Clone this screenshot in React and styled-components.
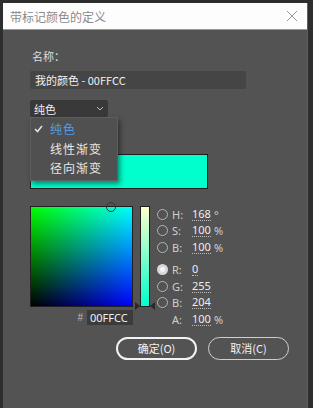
import styled, { createGlobalStyle } from 'styled-components'

const GlobalStyle = createGlobalStyle`
  html, body {
    margin: 0;
    padding: 0;
    background: #2e2e2e;
  }
  body {
    font-family: "Noto Sans CJK SC", "Noto Sans", sans-serif;
  }
`

const Screen = styled.div`
  width: 313px;
  height: 408px;
  padding: 3px 6px 0 3px;
  box-sizing: border-box;
  background: #2e2e2e;
  overflow: hidden;
`

const Window = styled.div`
  width: 304px;
  height: 405px;
  background: #535353;
  border-right: 1px solid #606060;
  display: flex;
  flex-direction: column;
`

const TitleBar = styled.div`
  height: 26px;
  flex: none;
  background: #fdfdfd;
  border-bottom: 1px solid #9a9a9a;
  display: flex;
  align-items: center;
  justify-content: space-between;
  padding: 0 7px 0 7px;
  color: #8a8a8a;
  font-size: 12px;
`

const Close = styled.svg`
  width: 12px;
  height: 12px;
  margin-right: 2px;
`

const Body = styled.div`
  position: relative;
  padding: 19px 0 0 27px;
  display: flex;
  flex-direction: column;
  color: #e0e0e0;
  font-size: 11px;
`

const Label = styled.div`
  line-height: 14px;
  padding-left: 2px;
  color: #dcdcdc;
`

const NameInput = styled.div`
  margin-top: 8px;
  width: 216px;
  height: 18px;
  background: #454545;
  border-radius: 2px;
  color: #f2f2f2;
  line-height: 18px;
  padding-left: 5px;
  box-sizing: border-box;
  font-size: 11px;
`

const Select = styled.div`
  margin-top: 11px;
  width: 78px;
  height: 17px;
  background: #393939;
  border-radius: 2px;
  display: flex;
  align-items: center;
  justify-content: space-between;
  padding: 0 4px 0 4px;
  box-sizing: border-box;
  color: #f0f0f0;
`

const Menu = styled.div`
  position: absolute;
  left: 27px;
  top: 87px;
  width: 86px;
  padding: 1px 0 2px;
  background: #505050;
  border: 1px solid #5e5e5e;
  box-shadow: 2px 3px 5px rgba(0, 0, 0, 0.45);
  z-index: 2;
`

const MenuItem = styled.div`
  height: 19.5px;
  display: flex;
  align-items: center;
  padding-left: 19px;
  position: relative;
  font-size: 12px;
  letter-spacing: 1px;
  color: ${p => (p.$active ? '#4f9ee8' : '#e6e6e6')};
`

const Check = styled.svg`
  position: absolute;
  left: 3px;
  top: 6px;
  width: 9px;
  height: 8px;
`

const Swatch = styled.div`
  margin-top: 37px;
  width: 178px;
  height: 35px;
  box-sizing: border-box;
  background: #00ffcc;
  border: 1.5px solid #1e1e1e;
`

const PickerRow = styled.div`
  margin-top: 17px;
  display: flex;
  align-items: flex-start;
`

const Left = styled.div`
  display: flex;
  flex-direction: column;
  align-items: flex-end;
`

const Field = styled.div`
  position: relative;
  width: 103px;
  height: 101px;
  box-sizing: border-box;
  border: 1px solid #202020;
  background:
    linear-gradient(to right, #000000, #0000ff),
    linear-gradient(to bottom, #00ff00, #000000);
  background-blend-mode: screen;
`

const Marker = styled.div`
  position: absolute;
  left: 75px;
  top: -5px;
  width: 8px;
  height: 8px;
  border-radius: 50%;
  border: 1px solid #333;
`

const SliderWrap = styled.div`
  position: relative;
  margin-left: 7px;
  width: 10px;
  height: 101px;
`

const Slider = styled.div`
  width: 10px;
  height: 101px;
  box-sizing: border-box;
  border: 1px solid #202020;
  background: linear-gradient(to bottom, #ffffcc, #00ffcc);
`

const Arrow = styled.div`
  position: absolute;
  bottom: -3px;
  width: 0;
  height: 0;
  border-top: 4px solid transparent;
  border-bottom: 4px solid transparent;
  ${p => (p.$side === 'left'
    ? 'left: -5px; border-left: 5px solid #2a2a2a;'
    : 'right: -5px; border-right: 5px solid #2a2a2a;')}
`

const HexRow = styled.div`
  margin-top: 3px;
  display: flex;
  align-items: center;
  gap: 4px;
  color: #bdbdbd;
  font-family: "Liberation Sans", sans-serif;
  font-size: 10px;
`

const HexInput = styled.div`
  width: 46px;
  height: 15px;
  line-height: 15px;
  background: #3b3b3b;
  color: #f0f0f0;
  padding-left: 3px;
  box-sizing: border-box;
  font-size: 11px;
  font-family: "Noto Sans", sans-serif;
`

const Channels = styled.div`
  margin-left: 7px;
  display: flex;
  flex-direction: column;
  font-family: "Noto Sans", sans-serif;
  font-size: 11px;
`

const Channel = styled.div`
  height: 16.5px;
  display: flex;
  align-items: center;
  margin-top: ${p => p.$gap || 0}px;
`

const Radio = styled.div`
  width: 11px;
  height: 11px;
  border-radius: 50%;
  border: 1px solid #b4b4b4;
  box-sizing: border-box;
  margin-right: 4px;
  display: flex;
  align-items: center;
  justify-content: center;
  visibility: ${p => (p.$hidden ? 'hidden' : 'visible')};
  ${p => p.$on && 'border: 3px solid #d8d8d8; background: #f4f4f4;'}
`

const ChLabel = styled.span`
  width: 20px;
  color: #d0d0d0;
`

const Value = styled.span`
  color: #ececec;
  border-bottom: 1px dotted #bbbbbb;
  line-height: 11px;
  padding-bottom: 1px;
  min-width: ${p => p.$w || 18}px;
`

const Unit = styled.span`
  margin-left: 3px;
  color: #cfcfcf;
`

const Buttons = styled.div`
  margin-top: 9px;
  padding-left: 86px;
  display: flex;
  gap: 11px;
`

const Button = styled.div`
  width: 81px;
  height: 23px;
  box-sizing: border-box;
  border-radius: 12px;
  border: ${p => (p.$primary ? '2px solid #f2f2f2' : '1px solid #cfcfcf')};
  display: flex;
  align-items: center;
  justify-content: center;
  color: #f2f2f2;
  font-size: 11px;
`

const channels = [
  { k: 'H', v: '168', u: '°' },
  { k: 'S', v: '100', u: '%' },
  { k: 'B', v: '100', u: '%' },
  { k: 'R', v: '0', on: true, gap: 6 },
  { k: 'G', v: '255' },
  { k: 'B', v: '204' },
  { k: 'A', v: '100', u: '%', noRadio: true },
]

export default function App() {
  return (
    <>
      <GlobalStyle />
      <Screen>
        <Window>
          <TitleBar>
            <span>带标记颜色的定义</span>
            <Close viewBox="0 0 12 12">
              <path d="M1 1 L11 11 M11 1 L1 11" stroke="#9a9a9a" strokeWidth="1" fill="none" />
            </Close>
          </TitleBar>
          <Body>
            <Label>名称：</Label>
            <NameInput>我的颜色 - 00FFCC</NameInput>
            <Select>
              <span>纯色</span>
              <svg width="8" height="5" viewBox="0 0 8 5">
                <path d="M1 1 L4 4 L7 1" stroke="#bdbdbd" strokeWidth="1" fill="none" />
              </svg>
            </Select>
            <Menu>
              <MenuItem $active>
                <Check viewBox="0 0 9 8">
                  <path d="M1 4 L3.5 6.5 L8 1" stroke="#e0e0e0" strokeWidth="1.6" fill="none" />
                </Check>
                纯色
              </MenuItem>
              <MenuItem>线性渐变</MenuItem>
              <MenuItem>径向渐变</MenuItem>
            </Menu>
            <Swatch />
            <PickerRow>
              <Left>
                <Field>
                  <Marker />
                </Field>
                <HexRow>
                  <span>#</span>
                  <HexInput>00FFCC</HexInput>
                </HexRow>
              </Left>
              <SliderWrap>
                <Slider />
                <Arrow $side="left" />
                <Arrow $side="right" />
              </SliderWrap>
              <Channels>
                {channels.map((c, i) => (
                  <Channel key={i} $gap={c.gap}>
                    <Radio $on={c.on} $hidden={c.noRadio} />
                    <ChLabel>{c.k}:</ChLabel>
                    <Value $w={c.v.length > 1 ? 18 : 6}>{c.v}</Value>
                    {c.u && <Unit>{c.u}</Unit>}
                  </Channel>
                ))}
              </Channels>
            </PickerRow>
            <Buttons>
              <Button $primary>确定(O)</Button>
              <Button>取消(C)</Button>
            </Buttons>
          </Body>
        </Window>
      </Screen>
    </>
  )
}
